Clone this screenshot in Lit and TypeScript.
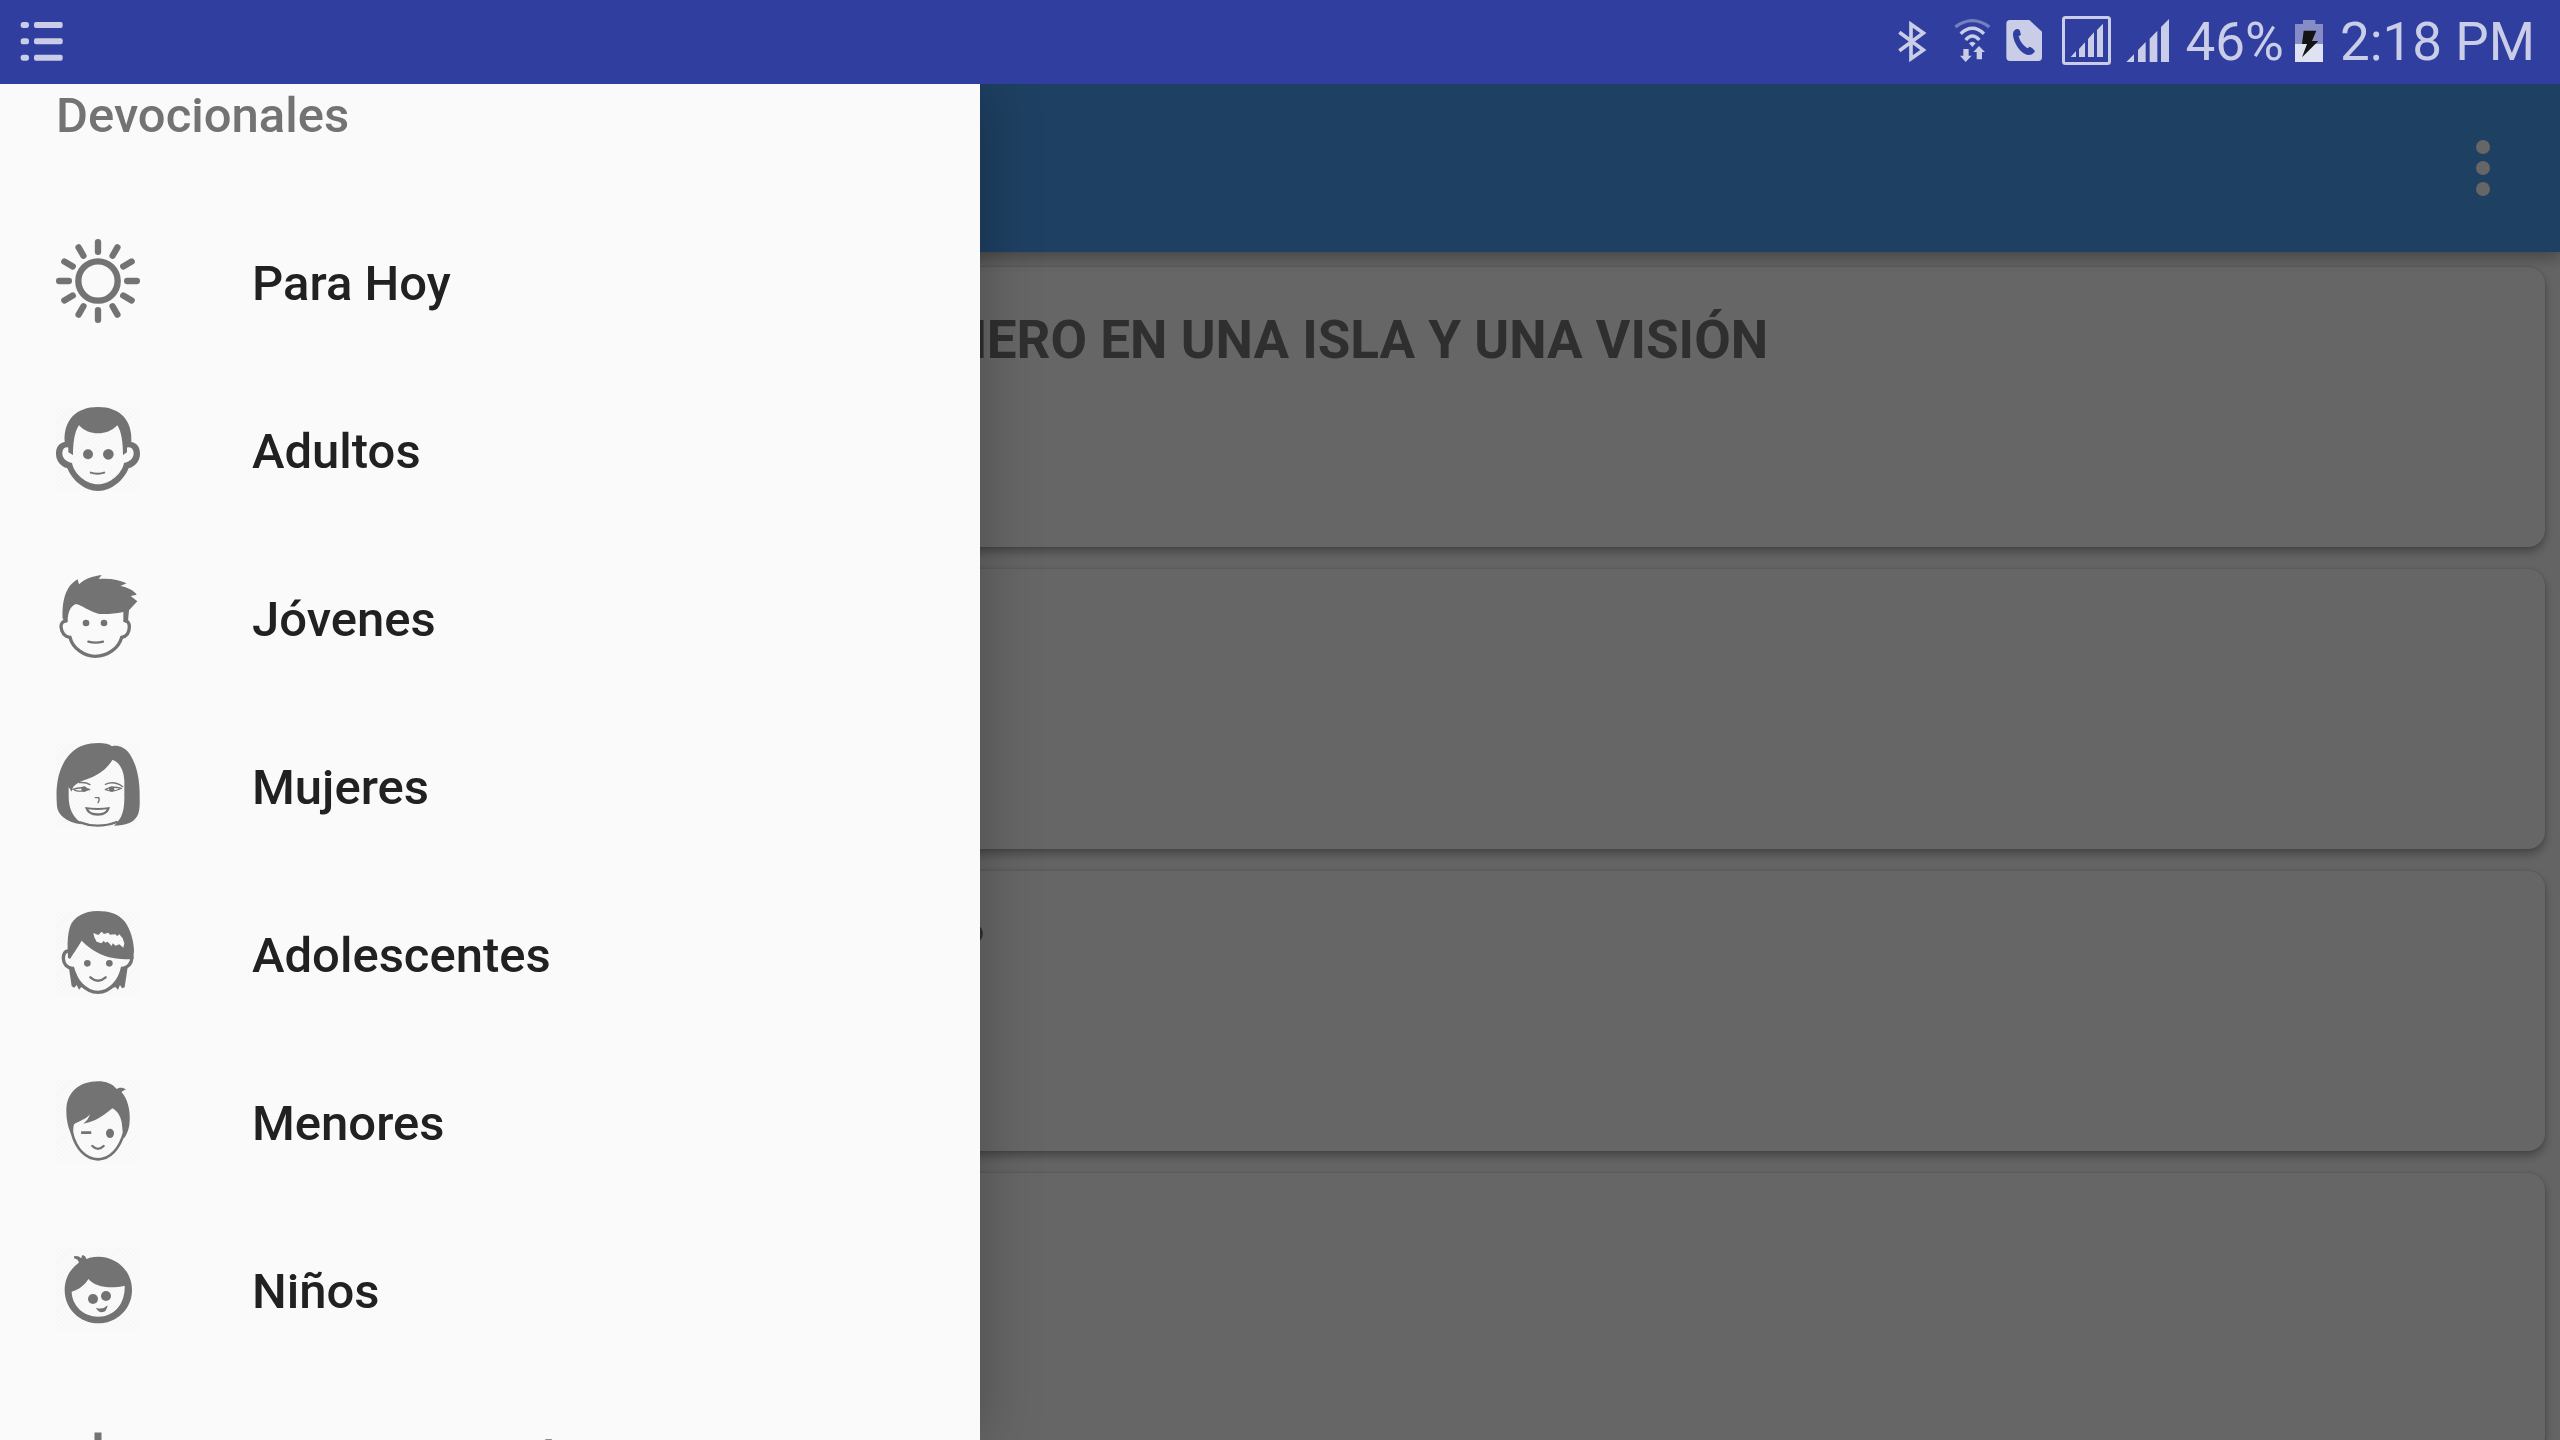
import { LitElement, html, css, svg } from "lit";
import { customElement } from "lit/decorators.js";
import { classMap } from "lit/directives/class-map.js";

const sun = svg`
  <circle class="line" cx="126" cy="126" r="59" stroke-width="19" />
  ${Array.from({ length: 12 }, (_, i) => svg`
    <path class="line" stroke-width="19" d="M126 9.5V38.5" transform="rotate(${i * 30} 126 126)" />`)}
`;

const man = svg`
  <path fill-rule="evenodd" d="M26 105C22 40 60 0 126 0S230 40 226 105C244 108 252 122 252 140C252 162 238 178 218 184C204 218 168 252 126 252S48 218 34 184C14 178 0 162 0 140C0 122 8 108 26 105Z
    M51 144C51 110 55 75 69 55C85 72 105 79 126 79S167 72 184 55C197 75 201 110 201 144L213 136V122C226 118 233 128 233 139C233 155 220 165 204 168C198 200 162 232 126 232S54 200 48 168C32 165 19 155 19 139C19 128 26 118 37 122V136Z" />
  <circle cx="96" cy="142" r="15" /><circle cx="157" cy="142" r="16" />
  <path class="line butt" stroke-width="6" d="M102 196Q125 204 147 196" />
`;

const youth = svg`
  <path d="M20 132C18 85 25 35 65 13L69 28C85 12 110 3 137 0L128 12C160 9 190 14 212 25L193 33C215 37 233 46 242 59L224 63L244 79L219 106L216 138L202 141V111C170 118 140 118 127 116C97 108 80 92 60 87C42 93 35 115 35 140Z" />
  <path class="line" stroke-width="10" d="M30 138C20 138 15 147 15 155C16 172 26 186 42 187C50 220 85 244 117 244C155 244 188 220 197 187C212 184 220 172 220 155C220 143 214 137 208 138" />
  <circle cx="90" cy="144" r="10" /><circle cx="144" cy="144" r="10" />
  <path class="line" stroke-width="7" d="M97 200Q119 206 141 200" />
`;

const woman = svg`
  <path d="M128 0C145 0 160 3 168 10C185 5 205 14 217 28C242 60 252 110 251 165C253 215 243 228 220 240C205 246 190 248 174 248L184 237C200 222 205 195 205 166V115C205 85 190 55 169 51C155 75 130 95 100 106C75 116 50 122 47 146L38 132V160C38 195 50 222 72 236L74 244C30 238 5 215 3 190C-2 130 5 70 45 30C68 8 95 0 128 0Z" />
  <path class="line" stroke-width="7" d="M72 238Q98 248 124 248Q155 248 182 237" />
  <path class="line" stroke-width="4" d="M70 119Q90 117 102 125M50 139Q80 129 101 140M56 142Q80 148 98 140M148 124Q175 112 200 131M148 140Q165 128 196 136M152 141Q170 148 192 138" />
  <circle cx="84" cy="138" r="8" /><circle cx="167" cy="138" r="8" />
  <path class="line" stroke-width="4" d="M118 164H128Q132 170 126 179" />
  <path fill-rule="evenodd" d="M87 192Q125 198 162 192C158 210 145 218 125 218S92 210 87 192ZM97 199Q125 203 152 199C148 208 138 211 125 211S102 208 97 199Z" />
`;

const teen = svg`
  <path fill-rule="evenodd" d="M35 115C34 90 36 65 42 47C52 18 85 0 125 0C160 0 185 8 205 30C224 55 233 90 234 118L232 144L222 145C205 145 185 144 167 140C140 135 105 118 77 89C66 108 52 128 42 144L36 140Z
    M112 66L127 72L137 62L144 69L157 65L162 71L177 70L184 75L190 70L200 82L205 97L202 110L190 100L179 104L170 97L167 105L155 92L147 95L144 89L136 97L122 92L115 79Z" />
  <path class="line" stroke-width="10" d="M36 120C26 121 22 132 22 143C23 160 34 171 50 172C58 205 85 244 126 244C165 244 192 205 199 172C215 170 226 160 228 140" />
  <path d="M38 165L47 226L55 230L62 222L69 236L76 228L92 234L72 215L54 172ZM215 168L206 229L198 232L192 222L186 236L178 228L162 234L182 210L196 172Z" />
  <circle cx="94" cy="157" r="10" /><circle cx="160" cy="157" r="10" />
  <path class="line" stroke-width="7" d="M103 199Q126 219 149 199" />
`;

const minor = svg`
  <path d="M126 7C150 7 170 15 182 30C190 24 202 25 210 31C204 34 199 36 197 40C215 60 223 95 221 125C220 150 213 165 204 178C199 165 200 150 197 130C193 110 183 95 169 88C145 108 115 130 82 134C92 126 98 118 102 106C90 122 70 125 54 136C50 150 52 165 54 178C40 160 31 130 31 95C31 40 70 7 126 7Z" />
  <path class="line" stroke-width="8" d="M48 162C60 210 90 241 126 241S190 210 204 162" />
  <rect x="75" y="157" width="31" height="8" rx="2" /><ellipse cx="162" cy="163" rx="12" ry="14" />
  <path class="line" stroke-width="7" d="M109 201Q126 218 143 201" />
`;

const child = svg`
  <path fill-rule="evenodd" d="M127 29C182 29 228 72 228 129S182 229 127 229S26 186 26 129S72 29 127 29Z
    M47 134C70 128 88 112 97 96C120 122 165 126 206 116C208 170 175 209 127 209C82 209 48 175 47 134Z" />
  <path d="M54 28Q66 24 76 34L78 25Q88 24 92 38L100 50L70 52Q68 36 54 34Z" />
  <circle cx="111" cy="156" r="15" /><circle cx="150" cy="147" r="15" />
  <path d="M120 182Q140 190 155 175Q152 196 137 196Q126 195 120 182Z" />
`;

const plus = svg`<path d="M199.5 136.5H136.5V199.5H115.5V136.5H52.5V115.5H115.5V52.5H136.5V115.5H199.5Z" />`;

const SECTIONS = [
  { label: "Para Hoy", icon: sun, hatched: false },
  { label: "Adultos", icon: man, hatched: true },
  { label: "Jóvenes", icon: youth, hatched: false },
  { label: "Mujeres", icon: woman, hatched: true },
  { label: "Adolescentes", icon: teen, hatched: true },
  { label: "Menores", icon: minor, hatched: true },
  { label: "Niños", icon: child, hatched: true },
  { label: "Nuestra Misión", icon: plus, hatched: false },
];

const READINGS = [
  "EL APÓSTOL JUAN COMO UN PRISIONERO EN UNA ISLA Y UNA VISIÓN",
  "EL PRIMER AMOR",
  "¿QUIÉN ES DIGNO DE ABRIR EL CIELO?",
  "LA GRAN PROMESA",
];

@customElement("status-bar")
export class StatusBar extends LitElement {
  static styles = css`
    :host {
      display: flex;
      align-items: center;
      justify-content: space-between;
      height: 84px;
      padding: 0 25px 0 20px;
      background: #303f9f;
      color: #c9cde7;
      font-size: 53px;
      line-height: 84px;
    }
    .tray {
      display: flex;
      align-items: center;
      gap: 10px;
    }
    svg {
      display: block;
      height: 52px;
      fill: currentColor;
    }
    .line {
      fill: none;
      stroke: currentColor;
    }
    .dim {
      opacity: 0.45;
    }
    .cut {
      fill: #303f9f;
    }
    .empty {
      fill: #868cc5;
    }
    .charge {
      fill: #dfe2f1;
    }
    .bolt {
      fill: #141414;
    }
  `;

  render() {
    return html`
      <svg viewBox="0 0 132 156" aria-hidden="true">
        ${[18, 67, 116].map((y) => svg`
          <rect x="2" y=${y} width="25" height="18" rx="8" />
          <rect x="42" y=${y} width="86" height="18" rx="6" />`)}
      </svg>
      <div class="tray">
        <svg viewBox="0 0 132 156" aria-hidden="true">
          <path class="line" stroke-width="11" d="M10 49L82 102L45 128V25L82 51L10 104" />
        </svg>
        <svg viewBox="0 0 126 156" aria-hidden="true">
          <path class="line dim" stroke-width="10" d="M16 33Q67 -5 118 33" />
          <path class="line" stroke-width="10" d="M32 53Q67 21 102 53M47 72Q67 48 88 72" />
          <path d="M57 82Q67 72 77 82L67 93ZM40 99H56V119H65L47 138L30 119H40ZM87 90L105 108H96V130H80V108H70Z" />
        </svg>
        <svg viewBox="0 0 138 156" aria-hidden="true">
          <path d="M24 12H82L120 47V124Q120 135 109 135H24Q13 135 13 124V23Q13 12 24 12Z" />
          <path class="cut" d="M45 39Q54 38 55 50L57 56L50 61Q55 82 76 97L84 92Q96 99 99 106Q92 117 80 117Q64 116 48 95Q32 72 33 52Q36 40 45 39Z" />
        </svg>
        <svg viewBox="0 0 162 156" aria-hidden="true">
          <rect class="line" x="16.5" y="4.5" width="138" height="138" rx="6" stroke-width="9" />
          <path d="M38 123L54 105V123ZM63 99L81 79V123H63ZM90 69L108 49V123H90ZM117 42L135 23V123H117Z" />
        </svg>
        <svg viewBox="0 0 162 156" aria-hidden="true">
          <path d="M13 138L36 115V138ZM48 102L71 78V138H48ZM83 68L106 44V138H83ZM117 33L141 9V138H117Z" />
        </svg>
        <span>46%</span>
        <svg viewBox="0 0 108 156" aria-hidden="true">
          <path class="empty" d="M3 24H27V12H64V24H87V84H3Z" />
          <path class="charge" d="M3 84H87V138H3Z" />
          <path class="bolt" d="M29 44H67L54 75H73L24 124L39 84H24Z" />
        </svg>
        <time>2:18 PM</time>
      </div>
    `;
  }
}

@customElement("nav-drawer")
export class NavDrawer extends LitElement {
  static styles = css`
    :host {
      display: block;
      box-sizing: border-box;
      overflow: hidden;
      background: #fafafa;
      box-shadow: 0 0 56px rgba(0, 0, 0, 0.26);
      font-size: 49px;
      font-weight: 500;
      line-height: 64px;
    }
    .heading {
      margin: 0;
      padding: 0 56px 49px;
      color: #737373;
      font: inherit;
    }
    .list {
      margin: 0;
      padding: 0;
      list-style: none;
    }
    .item {
      display: flex;
      align-items: center;
      gap: 112px;
      height: 168px;
      padding: 0 56px;
      color: #212121;
      text-decoration: none;
    }
    .label {
      padding-top: 6px;
    }
    svg {
      display: block;
      width: 84px;
      height: 84px;
      fill: #737373;
    }
    .hatched {
      background: repeating-linear-gradient(135deg, #f6f6f6 0 1px, #fafafa 1px 3px);
    }
    .line {
      fill: none;
      stroke: #737373;
      stroke-linecap: round;
    }
    .butt {
      stroke-linecap: butt;
    }
  `;

  render() {
    return html`
      <nav>
        <h2 class="heading">Devocionales</h2>
        <ul class="list">
          ${SECTIONS.map((section) => html`
            <li>
              <a class="item" href="#">
                <svg class=${classMap({ hatched: section.hatched })} viewBox="0 0 252 252" aria-hidden="true">${section.icon}</svg>
                <span class="label">${section.label}</span>
              </a>
            </li>`)}
        </ul>
      </nav>
    `;
  }
}

@customElement("app-root")
export class AppRoot extends LitElement {
  static styles = css`
    :host {
      display: flex;
      flex-direction: column;
      height: 100vh;
      overflow: hidden;
      font-family: Roboto, "Liberation Sans", sans-serif;
    }
    .screen {
      position: relative;
      display: flex;
      flex: 1;
      flex-direction: column;
      min-height: 0;
      overflow: hidden;
      background: #fafafa;
    }
    .toolbar {
      z-index: 1;
      display: flex;
      flex: none;
      align-items: center;
      justify-content: flex-end;
      height: 168px;
      padding-right: 35px;
      background: #4ba0f5;
      box-shadow: 0 6px 14px rgba(0, 0, 0, 0.3);
    }
    .more {
      display: grid;
      place-items: center;
      width: 84px;
      height: 84px;
      padding: 0;
      border: 0;
      background: none;
    }
    .more svg {
      width: 84px;
      height: 84px;
      fill: #fff;
    }
    .readings {
      display: flex;
      flex: 1;
      flex-direction: column;
      gap: 22px;
      min-height: 0;
      padding: 15px 15px 0;
    }
    .card {
      box-sizing: border-box;
      flex: none;
      height: 280px;
      padding: 41px 42px;
      border-radius: 17px;
      background: #fff;
      box-shadow: 0 5px 10px rgba(0, 0, 0, 0.3), 0 0 3px rgba(0, 0, 0, 0.15);
    }
    .title {
      margin: 0;
      color: #757575;
      font-size: 53px;
      font-weight: 700;
      line-height: 64px;
      white-space: nowrap;
    }
    .scrim {
      position: absolute;
      z-index: 2;
      inset: 0;
      background: rgba(0, 0, 0, 0.6);
    }
    .drawer {
      position: absolute;
      z-index: 3;
      top: 0;
      bottom: 0;
      left: 0;
      width: 980px;
      max-width: 100%;
    }
  `;

  render() {
    return html`
      <status-bar></status-bar>
      <div class="screen">
        <header class="toolbar">
          <button class="more" aria-label="Más opciones">
            <svg viewBox="0 0 84 84" aria-hidden="true">
              <circle cx="42" cy="21" r="7" /><circle cx="42" cy="42" r="7" /><circle cx="42" cy="63" r="7" />
            </svg>
          </button>
        </header>
        <main class="readings">
          ${READINGS.map((title) => html`<article class="card"><h3 class="title">${title}</h3></article>`)}
        </main>
        <div class="scrim"></div>
        <nav-drawer class="drawer"></nav-drawer>
      </div>
    `;
  }
}
